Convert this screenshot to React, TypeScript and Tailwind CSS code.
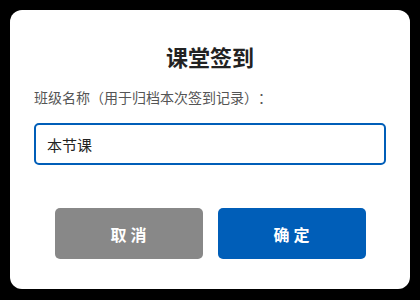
import React from "react";

export default function App() {
  return (
    <div
      className="w-[420px] h-[300px] bg-black p-[10px]"
      style={{ fontFamily: '"Noto Sans CJK SC", "Noto Sans", sans-serif' }}
    >
      <div className="w-[400px] h-[279px] bg-white rounded-[12px] px-[24px] pt-[31px] flex flex-col">
        <h1 className="text-center text-[22px] leading-[30px] font-bold text-[#222222]">课堂签到</h1>
        <label className="mt-[16px] text-[14px] leading-[20px] text-[#555555] [text-spacing-trim:space-all]">
          班级名称（用于归档本次签到记录）：
        </label>
        <input
          defaultValue="本节课"
          className="mt-[16px] h-[42px] w-full border-2 border-[#005eb8] rounded-[5px] px-[11px] text-[15px] text-[#222222] outline-none"
          style={{ fontFamily: '"Noto Sans CJK SC", "Noto Sans", sans-serif' }}
        />
        <div className="mt-[43px] flex justify-center gap-[15px]">
          <button className="w-[148px] h-[51px] rounded-[5px] bg-[#888888] text-white text-[16px] font-bold tracking-[4px] pl-[4px]">
            取消
          </button>
          <button className="w-[148px] h-[51px] rounded-[5px] bg-[#005eb8] text-white text-[16px] font-bold tracking-[4px] pl-[4px]">
            确定
          </button>
        </div>
      </div>
    </div>
  );
}
